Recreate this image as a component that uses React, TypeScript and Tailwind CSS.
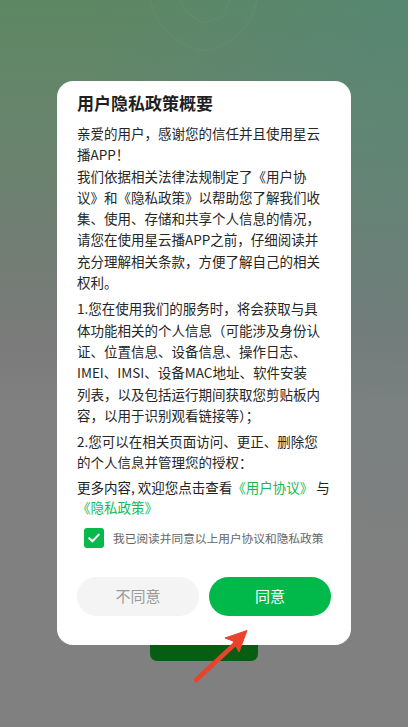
import React from 'react';

// 背景页（被遮罩压暗后的颜色）上的弹窗：用户隐私政策概要

const Line: React.FC<{ children: React.ReactNode }> = ({ children }) => (
  <span className="block whitespace-nowrap">{children}</span>
);

const PrivacyDialog: React.FC = () => (
  <div className="flex h-[564px] w-[294px] flex-col rounded-2xl bg-white px-5 text-[#222]">
    <h2 className="mt-[10px] h-[24px] text-[17px] font-semibold leading-[24px] text-[#1f1f1f]">用户隐私政策概要</h2>

    {/* 可滚动正文，底部被截断 */}
    <div className="mt-[8px] h-[346px] overflow-hidden text-[13.5px] leading-[21.3px] text-[#262626]">
      <p>
        <Line>亲爱的用户，感谢您的信任并且使用星云</Line>
        <Line>播APP！</Line>
      </p>
      <p>
        <Line>我们依据相关法律法规制定了《用户协</Line>
        <Line>议》和《隐私政策》以帮助您了解我们收</Line>
        <Line>集、使用、存储和共享个人信息的情况，</Line>
        <Line>请您在使用星云播APP之前，仔细阅读并</Line>
        <Line>充分理解相关条款，方便了解自己的相关</Line>
        <Line>权利。</Line>
      </p>
      <p className="mt-[5px]">
        <Line>1.您在使用我们的服务时，将会获取与具</Line>
        <Line>体功能相关的个人信息（可能涉及身份认</Line>
        <Line>证、位置信息、设备信息、操作日志、</Line>
        <Line>IMEI、IMSI、设备MAC地址、软件安装</Line>
        <Line>列表，以及包括运行期间获取您剪贴板内</Line>
        <Line>容，以用于识别观看链接等）；</Line>
      </p>
      <p className="mt-[5px]">
        <Line>2.您可以在相关页面访问、更正、删除您</Line>
        <Line>的个人信息并管理您的授权：</Line>
        <Line>3.未经您同意，我们不会向第三方共享、</Line>
      </p>
    </div>

    <div className="mt-[8px] -mr-3 text-[13.5px] leading-[20px] text-[#222]">
      <span className="block whitespace-nowrap">
        更多内容, 欢迎您点击查看<span className="text-[#17b956]">《用户协议》</span> 与
      </span>
      <span className="block whitespace-nowrap text-[#17b956]">《隐私政策》</span>
    </div>

    <label className="mt-[11px] flex items-center pl-[7px]">
      <span className="flex h-[20px] w-[20px] items-center justify-center rounded-[3px] bg-[#07b94a]">
        <svg viewBox="0 0 20 20" className="h-[16px] w-[16px]" fill="none">
          <path d="M4 10.2l4 3.9 8-8.3" stroke="#fff" strokeWidth="2.6" strokeLinecap="round" strokeLinejoin="round" />
        </svg>
      </span>
      <span className="ml-[9px] text-[11.7px] leading-[20px] text-[#666]">我已阅读并同意以上用户协议和隐私政策</span>
    </label>

    <div className="mt-[29px] flex gap-[10px]">
      <button className="h-[39px] w-[123px] rounded-full bg-[#f4f4f4] text-[15px] text-[#9a9a9a]">不同意</button>
      <button className="h-[39px] w-[123px] rounded-full bg-[#00b94a] text-[15px] text-white">同意</button>
    </div>
  </div>
);

export default function App() {
  return (
    <div className="relative h-[727px] w-[408px] overflow-hidden bg-[linear-gradient(180deg,#5d8763_0%,#68846d_18%,#737d75_36%,#7b7b7b_48%,#808080_56%,#808080_100%)] font-['Noto_Sans_CJK_SC',sans-serif]">
      {/* 右上角偏青色 */}
      <div className="pointer-events-none absolute inset-0 bg-[radial-gradient(ellipse_at_top_right,rgba(80,135,130,0.45)_0%,rgba(80,135,130,0)_55%)]" />

      {/* 背景页面内容 */}
      <div className="relative flex h-full flex-col items-center">
        <svg viewBox="0 0 408 60" className="h-[60px] w-[408px]" fill="none">
          <path d="M150 0 C156 22 168 42 204 51 C240 42 252 22 257 0" stroke="rgba(255,255,255,0.04)" strokeWidth="1.2" />
          <path d="M180 0 L187 13 L203 23 L223 17 L230 0" stroke="rgba(255,255,255,0.04)" strokeWidth="1.2" />
        </svg>
        <div className="mt-[560px] h-[41px] w-[108px] rounded-[7px] bg-[#075d11]" />
      </div>

      {/* 弹窗 */}
      <div className="absolute inset-0 flex justify-center pt-[81px]">
        <PrivacyDialog />
      </div>

      {/* 红色指示箭头 */}
      <svg className="pointer-events-none absolute left-0 top-0 h-[727px] w-[408px]" viewBox="0 0 408 727" fill="none">
        <path d="M196 680 L236 643" stroke="#e8432b" strokeWidth="4.5" strokeLinecap="round" />
        <path d="M247 630.5 L225 638 L233 641 L239 652 Z" fill="#e8432b" stroke="#e8432b" strokeWidth="1" strokeLinejoin="round" />
      </svg>
    </div>
  );
}
